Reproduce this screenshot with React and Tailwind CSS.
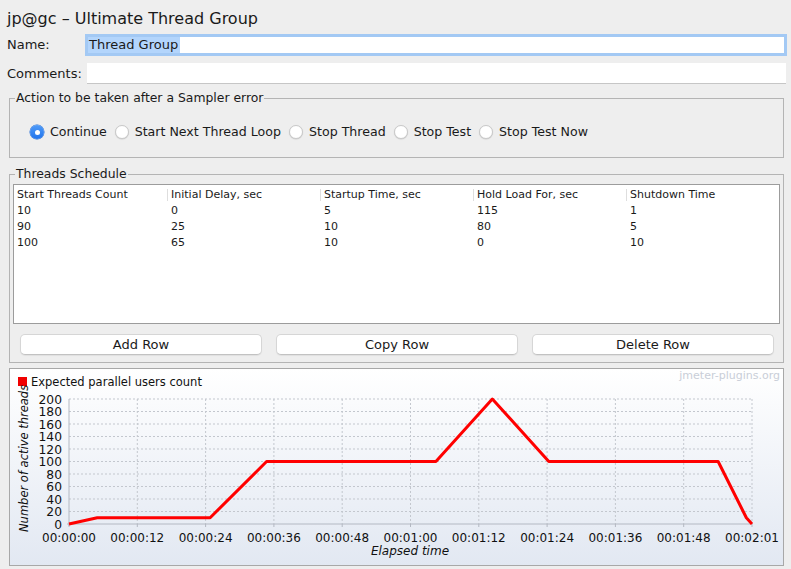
import React from "react";

const columns = [
  "Start Threads Count",
  "Initial Delay, sec",
  "Startup Time, sec",
  "Hold Load For, sec",
  "Shutdown Time",
];

const rows = [
  ["10", "0", "5", "115", "1"],
  ["90", "25", "10", "80", "5"],
  ["100", "65", "10", "0", "10"],
];

const actions = [
  "Continue",
  "Start Next Thread Loop",
  "Stop Thread",
  "Stop Test",
  "Stop Test Now",
];

const xLabels = [
  "00:00:00",
  "00:00:12",
  "00:00:24",
  "00:00:36",
  "00:00:48",
  "00:01:00",
  "00:01:12",
  "00:01:24",
  "00:01:36",
  "00:01:48",
  "00:02:01",
];

// time (s), active threads
const schedule = [
  [0, 0],
  [5, 10],
  [25, 10],
  [35, 100],
  [65, 100],
  [75, 200],
  [85, 100],
  [115, 100],
  [120, 10],
  [121, 0],
];

const X0 = 59;
const X1 = 742;
const Y0 = 155;
const px = (t) => X0 + (t * (X1 - X0)) / 121;
const py = (v) => Y0 - v * 0.625;

const Radio = ({ checked, label }) => (
  <label className="flex items-center">
    {checked ? (
      <span className="w-[14px] h-[14px] rounded-full bg-gradient-to-b from-[#4f9bf8] to-[#1f73ec] flex items-center justify-center shadow-[0_0_0_0.5px_#1a66d4]">
        <span className="w-[5px] h-[5px] rounded-full bg-white" />
      </span>
    ) : (
      <span className="w-[14px] h-[14px] rounded-full bg-white border border-[#c9c9c9] shadow-[0_0.5px_1px_rgba(0,0,0,0.15)]" />
    )}
    <span className="ml-[6px] mr-[8px] text-[12.6px]">{label}</span>
  </label>
);

const Chart = () => {
  const line = schedule.map(([t, v]) => `${px(t)},${py(v)}`).join(" ");
  return (
    <svg width="773" height="196" className="block">
      <defs>
        <linearGradient id="bg" x1="0" y1="0" x2="0" y2="1">
          <stop offset="0" stopColor="#ffffff" />
          <stop offset="1" stopColor="#e2e8f2" />
        </linearGradient>
      </defs>
      <rect x="0" y="0" width="773" height="196" fill="url(#bg)" />
      <text x="770" y="10" textAnchor="end" fontSize="11" fill="#c9ced8">
        jmeter-plugins.org
      </text>
      <rect x="8" y="8" width="9" height="9" fill="#f00000" />
      <text x="21" y="17" fontSize="11.5" fill="#111">
        Expected parallel users count
      </text>
      {[20, 40, 60, 80, 100, 120, 140, 160, 180, 200].map((v) => (
        <line
          key={v}
          x1={X0}
          x2={X1}
          y1={py(v)}
          y2={py(v)}
          stroke="#c3c7ce"
          strokeDasharray="2 2"
        />
      ))}
      {xLabels.map((_, i) =>
        i === 0 ? null : (
          <line
            key={i}
            x1={X0 + i * 68.3}
            x2={X0 + i * 68.3}
            y1={py(200)}
            y2={Y0}
            stroke="#c3c7ce"
            strokeDasharray="2 2"
          />
        )
      )}
      <line x1={X0} x2={X0} y1={py(200)} y2={Y0 + 2} stroke="#b3b8c2" />
      <line x1={X0 - 2} x2={X1} y1={Y0} y2={Y0} stroke="#b3b8c2" />
      {xLabels.map((_, i) => (
        <line
          key={i}
          x1={X0 + i * 68.3}
          x2={X0 + i * 68.3}
          y1={Y0}
          y2={Y0 + 3}
          stroke="#b3b8c2"
        />
      ))}
      {[0, 20, 40, 60, 80, 100, 120, 140, 160, 180, 200].map((v) => (
        <text
          key={v}
          x="52"
          y={py(v) + 4.5}
          textAnchor="end"
          fontSize="12.3"
          fill="#111"
        >
          {v}
        </text>
      ))}
      {xLabels.map((l, i) => (
        <text
          key={l}
          x={X0 + i * 68.3}
          y="173"
          textAnchor="middle"
          fontSize="12"
          fill="#111"
        >
          {l}
        </text>
      ))}
      <text
        x="400"
        y="186"
        textAnchor="middle"
        fontSize="12"
        fontStyle="italic"
        fill="#111"
      >
        Elapsed time
      </text>
      <text
        transform="rotate(-90)"
        x="-163"
        y="18"
        fontSize="11.5"
        fontStyle="italic"
        fill="#111"
      >
        Number of active threads
      </text>
      <polyline
        points={line}
        fill="none"
        stroke="#ff0000"
        strokeWidth="3"
        strokeLinejoin="round"
      />
    </svg>
  );
};

export default function App() {
  return (
    <div className="w-[791px] h-[569px] overflow-hidden bg-[#eeeeee] text-[#1a1a1a] text-[13px] leading-[16px] font-['DejaVu_Sans',sans-serif]">
      <div className="pt-[9px] pl-[7px] text-[16px] leading-[20px] h-[29px]">
        jp@gc – Ultimate Thread Group
      </div>

      <div className="flex items-center mt-[5px] h-[22px]">
        <span className="pl-[7px] w-[85px]">Name:</span>
        <div className="w-[702px] h-[22px] border-[3px] border-[#a3c9f4] bg-white flex items-center">
          <span className="bg-[#b3d5fc] pl-[1px] pr-[2px]">Thread Group</span>
        </div>
      </div>

      <div className="flex items-center mt-[7px] h-[21px]">
        <span className="pl-[7px] w-[87px]">Comments:</span>
        <div className="w-[699px] h-[21px] bg-white border-b border-[#c6c6c6]" />
      </div>

      <fieldset className="ml-[9px] mt-[6px] w-[775px] border border-[#b4b4b4] pb-[17px]">
        <legend className="ml-[5px] px-[1px] text-[12.4px]">
          Action to be taken after a Sampler error
        </legend>
        <div className="flex items-center mt-[18px] pl-[20px]">
          {actions.map((a, i) => (
            <Radio key={a} label={a} checked={i === 0} />
          ))}
        </div>
      </fieldset>

      <fieldset className="ml-[9px] mt-[8px] w-[775px] border border-[#b4b4b4] pb-[7px]">
        <legend className="ml-[5px] px-[1px] text-[12.4px]">Threads Schedule</legend>
        <div className="px-[3px]">
          <div className="mt-[2px] h-[140px] bg-white border border-[#9c9c9c] text-[11px] leading-[16px] pt-[2px]">
            <div className="grid grid-cols-5">
              {columns.map((c, i) => (
                <div key={c} className="flex items-center h-[16px]">
                  {i > 0 && <span className="w-px h-[12px] bg-[#dedede]" />}
                  <span className="pl-[3px]">{c}</span>
                </div>
              ))}
            </div>
            {rows.map((r, ri) => (
              <div key={ri} className="grid grid-cols-5">
                {r.map((v, ci) => (
                  <div
                    key={ci}
                    className={ci > 0 ? "pl-[4px] h-[16px]" : "pl-[3px] h-[16px]"}
                  >
                    {v}
                  </div>
                ))}
              </div>
            ))}
          </div>
          <div className="flex gap-[14px] mt-[10px] pl-[7px]">
            {["Add Row", "Copy Row", "Delete Row"].map((b) => (
              <button
                key={b}
                className="w-[242px] h-[21px] bg-white rounded-[5px] border border-[#d6d6d6] border-b-[#c2c2c2] shadow-[0_1px_1px_rgba(0,0,0,0.06)] text-[13px] leading-[16px] text-[#1a1a1a]"
              >
                {b}
              </button>
            ))}
          </div>
        </div>
      </fieldset>

      <div className="ml-[9px] mt-[5px] w-[775px] h-[198px] border border-[#a8a8a8]">
        <Chart />
      </div>
    </div>
  );
}
